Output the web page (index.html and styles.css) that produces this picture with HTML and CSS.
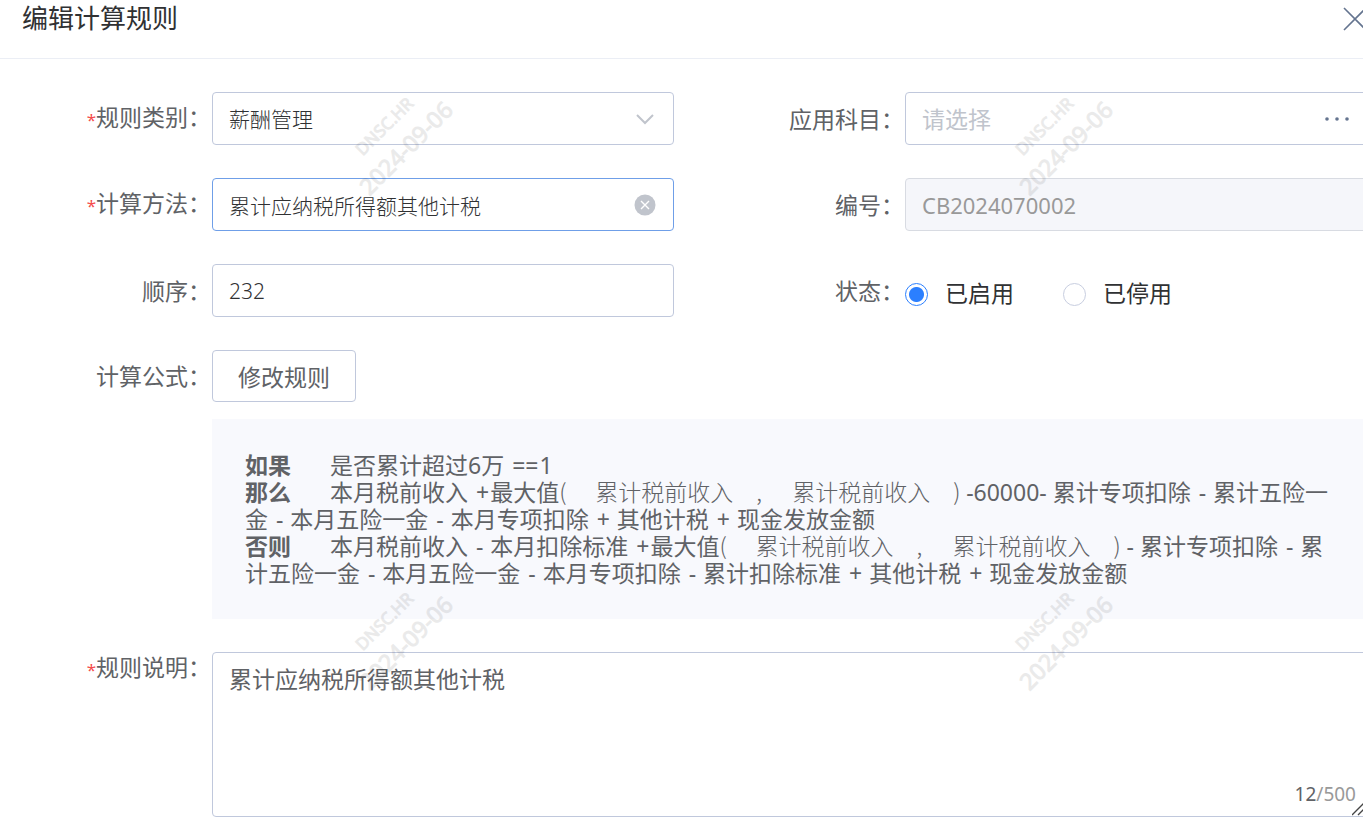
FILE: index.html
```html
<!DOCTYPE html>
<html lang="zh-CN">
<head>
<meta charset="utf-8">
<title>编辑计算规则</title>
<link rel="stylesheet" href="styles.css">
</head>
<body>
<main class="dialog">
  <header class="dialog-header">
    <h1 class="dialog-title">编辑计算规则</h1>
    <button class="close" type="button" aria-label="关闭">
      <svg width="24" height="24" viewBox="0 0 24 24"><path d="M1 1 23 23M23 1 1 23"/></svg>
    </button>
  </header>

  <form class="form">
    <label class="label" for="category"><span class="required">*</span>规则类别：</label>
    <div class="field">
      <select class="control" id="category"><option>薪酬管理</option></select>
      <svg class="icon chevron" width="20" height="12" viewBox="0 0 20 12"><path d="M2 2 10 10 18 2"/></svg>
    </div>
    <label class="label" for="subject">应用科目：</label>
    <div class="field">
      <input class="control large" id="subject" type="text" placeholder="请选择">
      <button class="icon more" type="button" aria-label="选择科目">
        <svg width="24" height="4" viewBox="0 0 24 4"><circle cx="2" cy="2" r="1.8"/><circle cx="12" cy="2" r="1.8"/><circle cx="22" cy="2" r="1.8"/></svg>
      </button>
    </div>

    <label class="label" for="method"><span class="required">*</span>计算方法：</label>
    <div class="field">
      <input class="control active" id="method" type="text" value="累计应纳税所得额其他计税">
      <button class="icon clear" type="button" aria-label="清除">
        <svg width="22" height="22" viewBox="0 0 22 22"><circle cx="11" cy="11" r="10.5"/><path d="M7 7 15 15M15 7 7 15"/></svg>
      </button>
    </div>
    <label class="label" for="code">编号：</label>
    <div class="field">
      <input class="control large" id="code" type="text" value="CB2024070002" disabled>
    </div>

    <label class="label" for="order">顺序：</label>
    <div class="field">
      <input class="control" id="order" type="text" value="232">
    </div>
    <span class="label" id="status-label">状态：</span>
    <div class="radios" role="radiogroup" aria-labelledby="status-label">
      <label class="radio"><input type="radio" name="status" checked>已启用</label>
      <label class="radio"><input type="radio" name="status">已停用</label>
    </div>

    <span class="label">计算公式：</span>
    <div class="wide">
      <button class="edit" type="button">修改规则</button>
    </div>

    <div class="formula">
      <p><b>如果</b>是否累计超过6万 <span class="op">==</span>1</p>
      <p><b>那么</b>本月税前收入 <span class="op">+</span>最大值<i>(</i><span class="arg">累计税前收入</span><i>,</i><span class="arg">累计税前收入</span><i>)</i>-60000- 累计专项扣除 <span class="op">-</span> 累计五险一金 <span class="op">-</span> 本月五险一金 <span class="op">-</span> 本月专项扣除 <span class="op">+</span> 其他计税 <span class="op">+</span> 现金发放金额</p>
      <p><b>否则</b>本月税前收入 <span class="op">-</span> 本月扣除标准 <span class="op">+</span>最大值<i>(</i><span class="arg">累计税前收入</span><i>,</i><span class="arg">累计税前收入</span><i>)</i>- 累计专项扣除 <span class="op">-</span> 累计五险一金 <span class="op">-</span> 本月五险一金 <span class="op">-</span> 本月专项扣除 <span class="op">-</span> 累计扣除标准 <span class="op">+</span> 其他计税 <span class="op">+</span> 现金发放金额</p>
    </div>

    <label class="label label-top" for="note"><span class="required">*</span>规则说明：</label>
    <div class="wide note">
      <textarea class="control area" id="note">累计应纳税所得额其他计税</textarea>
      <span class="counter"><span class="count">12</span>/500</span>
      <svg class="grip" width="14" height="14" viewBox="0 0 14 14"><path d="M0 13 13 0M6 13 13 6"/></svg>
    </div>
  </form>

  <div class="watermarks" aria-hidden="true">
    <div class="mark"><span class="mark-name">DNSC.HR</span><span>2024-09-06</span></div>
    <div class="mark"><span class="mark-name">DNSC.HR</span><span>2024-09-06</span></div>
    <div class="mark"><span class="mark-name">DNSC.HR</span><span>2024-09-06</span></div>
    <div class="mark"><span class="mark-name">DNSC.HR</span><span>2024-09-06</span></div>
  </div>
</main>
</body>
</html>
```
FILE: styles.css
```css
* {
  box-sizing: border-box;
}

body {
  margin: 0;
  background: #fff;
  color: #606266;
  font-family: "Noto Sans", "Noto Sans CJK SC", sans-serif;
  font-size: 23px;
  line-height: 30px;
}

button,
input,
select,
textarea {
  margin: 0;
  font: inherit;
  color: inherit;
}

.dialog {
  position: relative;
  min-height: 100vh;
  overflow: hidden;
}

.dialog-header {
  display: flex;
  justify-content: space-between;
  margin-right: -4px;
  padding: 0 0 22px 22px;
  border-bottom: 1px solid #ebeef5;
}

.dialog-title {
  margin: 0;
  font-size: 26px;
  font-weight: 400;
  line-height: 36px;
  color: #303133;
}

.close {
  display: flex;
  align-items: center;
  padding: 2px 0 0;
  border: 0;
  background: none;
}

.close svg {
  fill: none;
  stroke: #64748f;
  stroke-width: 1.6;
}

.form {
  display: grid;
  grid-template-columns: 212px minmax(0, 1fr) 231px minmax(0, 1fr);
  row-gap: 33px;
  margin-right: -4px;
  padding: 33px 0 16px;
}

.label {
  align-self: center;
  padding-right: 1px;
  text-align: right;
  white-space: nowrap;
}

.label-top {
  align-self: start;
}

.required {
  color: #f54c4c;
  font-size: 17px;
}

.field,
.note {
  position: relative;
}

.control {
  display: block;
  width: 100%;
  height: 53px;
  padding: 0 16px;
  border: 1px solid #c0c8dc;
  border-radius: 4px;
  outline: 0;
  background: #fff;
  appearance: none;
  color: #303133;
  font-size: 21px;
  font-weight: 300;
}

.control::placeholder {
  color: #c0c4cc;
  opacity: 1;
}

.control.large {
  font-size: 23px;
  font-weight: 400;
}

.control.active {
  border-color: #6f9fe8;
}

.control:disabled {
  border-color: #d8dbe2;
  background: #f5f6fa;
  color: #999;
  font-size: 22px;
}

.icon {
  position: absolute;
  top: 0;
  bottom: 0;
  display: flex;
  align-items: center;
  margin: auto 0;
  padding: 0;
  border: 0;
  background: none;
}

.chevron {
  right: 19px;
  fill: none;
  stroke: #c0c4cc;
  stroke-width: 2;
}

.more {
  right: 18px;
  fill: #64748f;
}

.clear {
  right: 18px;
}

.clear circle {
  fill: #c0c4cc;
}

.clear path {
  stroke: #fff;
  stroke-width: 1.4;
}

.radios {
  display: flex;
  align-items: center;
  gap: 49px;
  padding-top: 4px;
  color: #303133;
}

.radio {
  display: flex;
  align-items: center;
  gap: 17px;
}

.radio input {
  width: 23px;
  height: 23px;
  margin-top: 3px;
  border: 1px solid #c8cee0;
  border-radius: 50%;
  appearance: none;
}

.radio input:checked {
  border-color: #2b7fff;
  background: radial-gradient(circle, #2b7fff 7px, transparent 8px);
}

.wide {
  grid-column: 2 / -1;
}

.edit {
  height: 52px;
  padding: 2px 25px 0;
  border: 1px solid #c0c8dc;
  border-radius: 4px;
  background: #fff;
}

.formula {
  grid-column: 2 / -1;
  margin-top: -16px;
  padding: 33px 33px 32px;
  background: #f8f9fd;
  line-height: 27px;
}

.formula p {
  margin: 0;
}

.formula b {
  margin-right: 39px;
}

.formula i {
  display: inline-block;
  width: 13px;
  font-family: "Noto Sans CJK SC", sans-serif;
  font-style: normal;
  font-weight: 300;
  line-height: 20px;
}

.op {
  margin: 0 1px 0 2px;
}

.arg {
  margin: 0 23px;
  font-weight: 300;
}

.area {
  height: 165px;
  padding: 11px 16px;
  color: #606266;
  font-size: 23px;
  font-weight: 400;
  resize: none;
}

.counter {
  position: absolute;
  right: 11px;
  bottom: 8px;
  color: #999;
  font-size: 19px;
}

.count {
  color: #606266;
}

.grip {
  position: absolute;
  right: 1px;
  bottom: 1px;
  fill: none;
  stroke: #444;
  stroke-width: 1.4;
}

.watermarks {
  position: absolute;
  top: -111px;
  left: 65px;
  display: grid;
  grid-template-columns: repeat(2, 660px);
  grid-auto-rows: 495px;
  place-items: center;
  pointer-events: none;
}

.mark {
  display: flex;
  flex-direction: column;
  align-items: center;
  color: #000;
  opacity: 0.08;
  font-weight: 400;
  -webkit-text-stroke: 1px #000;
  transform: rotate(-45deg);
}

.mark-name {
  font-size: 17px;
}
```
